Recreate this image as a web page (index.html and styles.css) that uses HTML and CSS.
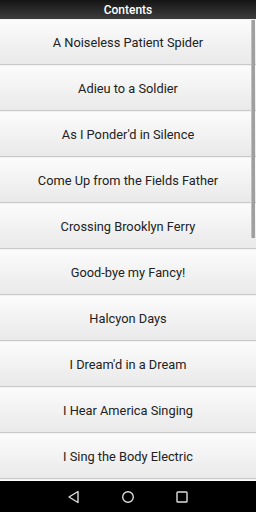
FILE: index.html
```html
<!DOCTYPE html>
<html lang="en">
<head>
    <meta charset="UTF-8">
    <meta name="viewport" content="width=device-width, initial-scale=1.0">
    <title>Contents</title>
    <link rel="stylesheet" href="styles.css">
</head>
<body>

<div class="app">
    <div class="header">Contents</div>

    <div class="list">
        <div class="item">A Noiseless Patient Spider</div>
        <div class="item">Adieu to a Soldier</div>
        <div class="item">As I Ponder'd in Silence</div>
        <div class="item">Come Up from the Fields Father</div>
        <div class="item">Crossing Brooklyn Ferry</div>
        <div class="item">Good-bye my Fancy!</div>
        <div class="item">Halcyon Days</div>
        <div class="item">I Dream'd in a Dream</div>
        <div class="item">I Hear America Singing</div>
        <div class="item">I Sing the Body Electric</div>
        <div class="item"></div>
        <div class="scrollbar"></div>
    </div>

    <div class="navbar">
        <svg width="14" height="14" viewBox="0 0 14 14">
            <path d="M11 1.5 L11 12.5 L2 7 Z" fill="none" stroke="#ddd" stroke-width="1.4" stroke-linejoin="round"/>
        </svg>
        <svg width="14" height="14" viewBox="0 0 14 14">
            <circle cx="7" cy="7" r="5.3" fill="none" stroke="#ddd" stroke-width="1.4"/>
        </svg>
        <svg width="14" height="14" viewBox="0 0 14 14">
            <rect x="2" y="2" width="10" height="10" rx="0.8" fill="none" stroke="#ddd" stroke-width="1.4"/>
        </svg>
    </div>
</div>

</body>
</html>
```

FILE: styles.css
```css
body {
    margin: 0;
    padding: 0;
    font-family: Roboto, "Liberation Sans", sans-serif;
    background: #000;
}
.app {
    width: 256px;
    height: 512px;
    display: flex;
    flex-direction: column;
    overflow: hidden;
}
.header {
    height: 19px;
    line-height: 20px;
    text-align: center;
    color: #fff;
    font-size: 12px;
    font-weight: 500;
    background: linear-gradient(#151515, #3d3d3d);
}
.list {
    position: relative;
    height: 462px;
    overflow: hidden;
    background: #eee;
}
.item {
    height: 44px;
    display: flex;
    align-items: center;
    justify-content: center;
    font-size: 12.8px;
    color: #222;
    background: linear-gradient(#fcfcfc, #e9e9e9);
    border-bottom: 1px solid #c9c9c9;
    box-shadow: inset 0 1px 0 #f2f2f2;
    padding-top: 1px;
    white-space: nowrap;
}
.scrollbar {
    position: absolute;
    top: 1px;
    right: 1px;
    width: 3px;
    height: 218px;
    background: #9f9f9f;
    border-left: 1px solid #c0c0c0;
}
.navbar {
    flex: 1;
    display: flex;
    align-items: center;
    justify-content: center;
    gap: 40px;
    background: #000;
}
```
